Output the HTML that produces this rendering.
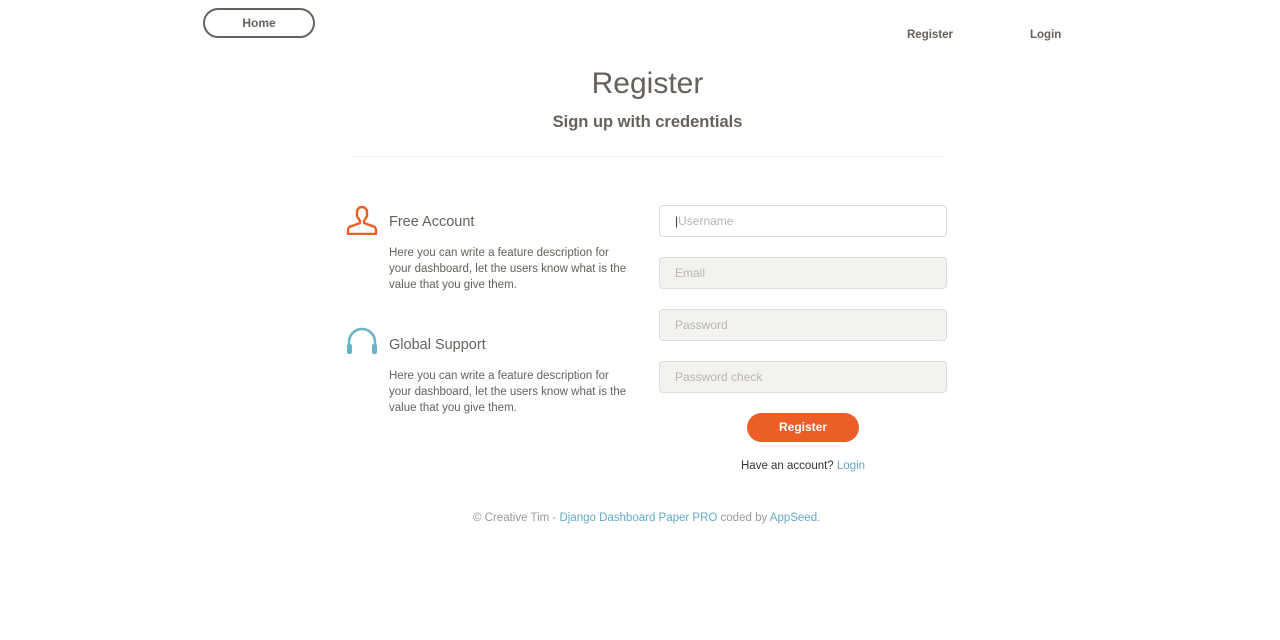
<!DOCTYPE html>
<html><head><meta charset="utf-8"><style>
*{box-sizing:border-box;margin:0;padding:0}
body{width:1280px;height:640px;background:#fff;font-family:"Liberation Sans",sans-serif;color:#66615b;position:relative;overflow:hidden}
.a{position:absolute}
.home{left:203px;top:8px;width:112px;height:30px;border:2px solid #66615b;border-radius:16px;font-size:12px;font-weight:bold;text-align:center;line-height:26px}
.nav{font-size:11.5px;font-weight:bold;top:29px}
h2{position:absolute;left:0;width:1295px;text-align:center;top:67px;font-size:30px;font-weight:normal}
h5{position:absolute;left:0;width:1295px;text-align:center;top:113px;font-size:16.5px;font-weight:bold}
.hr{left:351px;top:156px;width:593px;height:1px;background:#eee}
.ft{font-size:14.5px;color:#66615b}
.desc{font-size:11.5px;line-height:16px;width:240px;color:#66615b}
.in{left:659px;width:288px;height:32px;border:1px solid #ddd;border-radius:4px;font-size:12px;color:#b8b5b0;padding-left:15px;line-height:30px;background:#f3f2ee}
.btn{left:747px;top:413px;width:112px;height:29px;border-radius:15px;background:#eb5e28;color:#fff;font-size:12px;font-weight:bold;text-align:center;line-height:29px}
a{color:#66a9c5;text-decoration:none}
</style></head><body>
<div class="a home">Home</div>
<div class="a nav" style="left:907px">Register</div>
<div class="a nav" style="left:1030px">Login</div>
<h2>Register</h2>
<h5>Sign up with credentials</h5>
<div class="a hr"></div>
<svg class="a" style="left:346px;top:205px" width="32" height="30" viewBox="0 0 32 30"><path d="M11 7a5 5 0 0 1 10 0v4l-3 5v2l8 3a4 4 0 0 1 4 4v4H2v-4a4 4 0 0 1 4-4l8-3v-2l-3-5z" fill="none" stroke="#eb5e28" stroke-width="2.4" stroke-linejoin="round"/></svg>
<div class="a ft" style="left:389px;top:214px">Free Account</div>
<div class="a desc" style="left:389px;top:245px">Here you can write a feature description for your dashboard, let the users know what is the value that you give them.</div>
<svg class="a" style="left:346px;top:327px" width="32" height="30" viewBox="0 0 32 30"><path d="M3 20v-5a13 13 0 0 1 26 0v5" fill="none" stroke="#68b3c8" stroke-width="2.5"/><rect x="1" y="17" width="5" height="10" rx="2" fill="#68b3c8"/><rect x="26" y="17" width="5" height="10" rx="2" fill="#68b3c8"/></svg>
<div class="a ft" style="left:389px;top:337px">Global Support</div>
<div class="a desc" style="left:389px;top:368px">Here you can write a feature description for your dashboard, let the users know what is the value that you give them.</div>
<div class="a in" style="top:205px;background:#fff"><span style="color:#333">|</span>Username</div>
<div class="a in" style="top:257px">Email</div>
<div class="a in" style="top:309px">Password</div>
<div class="a in" style="top:361px">Password check</div>
<div class="a btn">Register</div>
<div class="a" style="left:741px;top:460px;font-size:11.5px;color:#333">Have an account? <a>Login</a></div>
<div class="a" style="left:473px;top:512px;font-size:11.5px;color:#9a9a9a">© Creative Tim - <a>Django Dashboard Paper PRO</a> coded by <a>AppSeed</a>.</div>
</body></html>
